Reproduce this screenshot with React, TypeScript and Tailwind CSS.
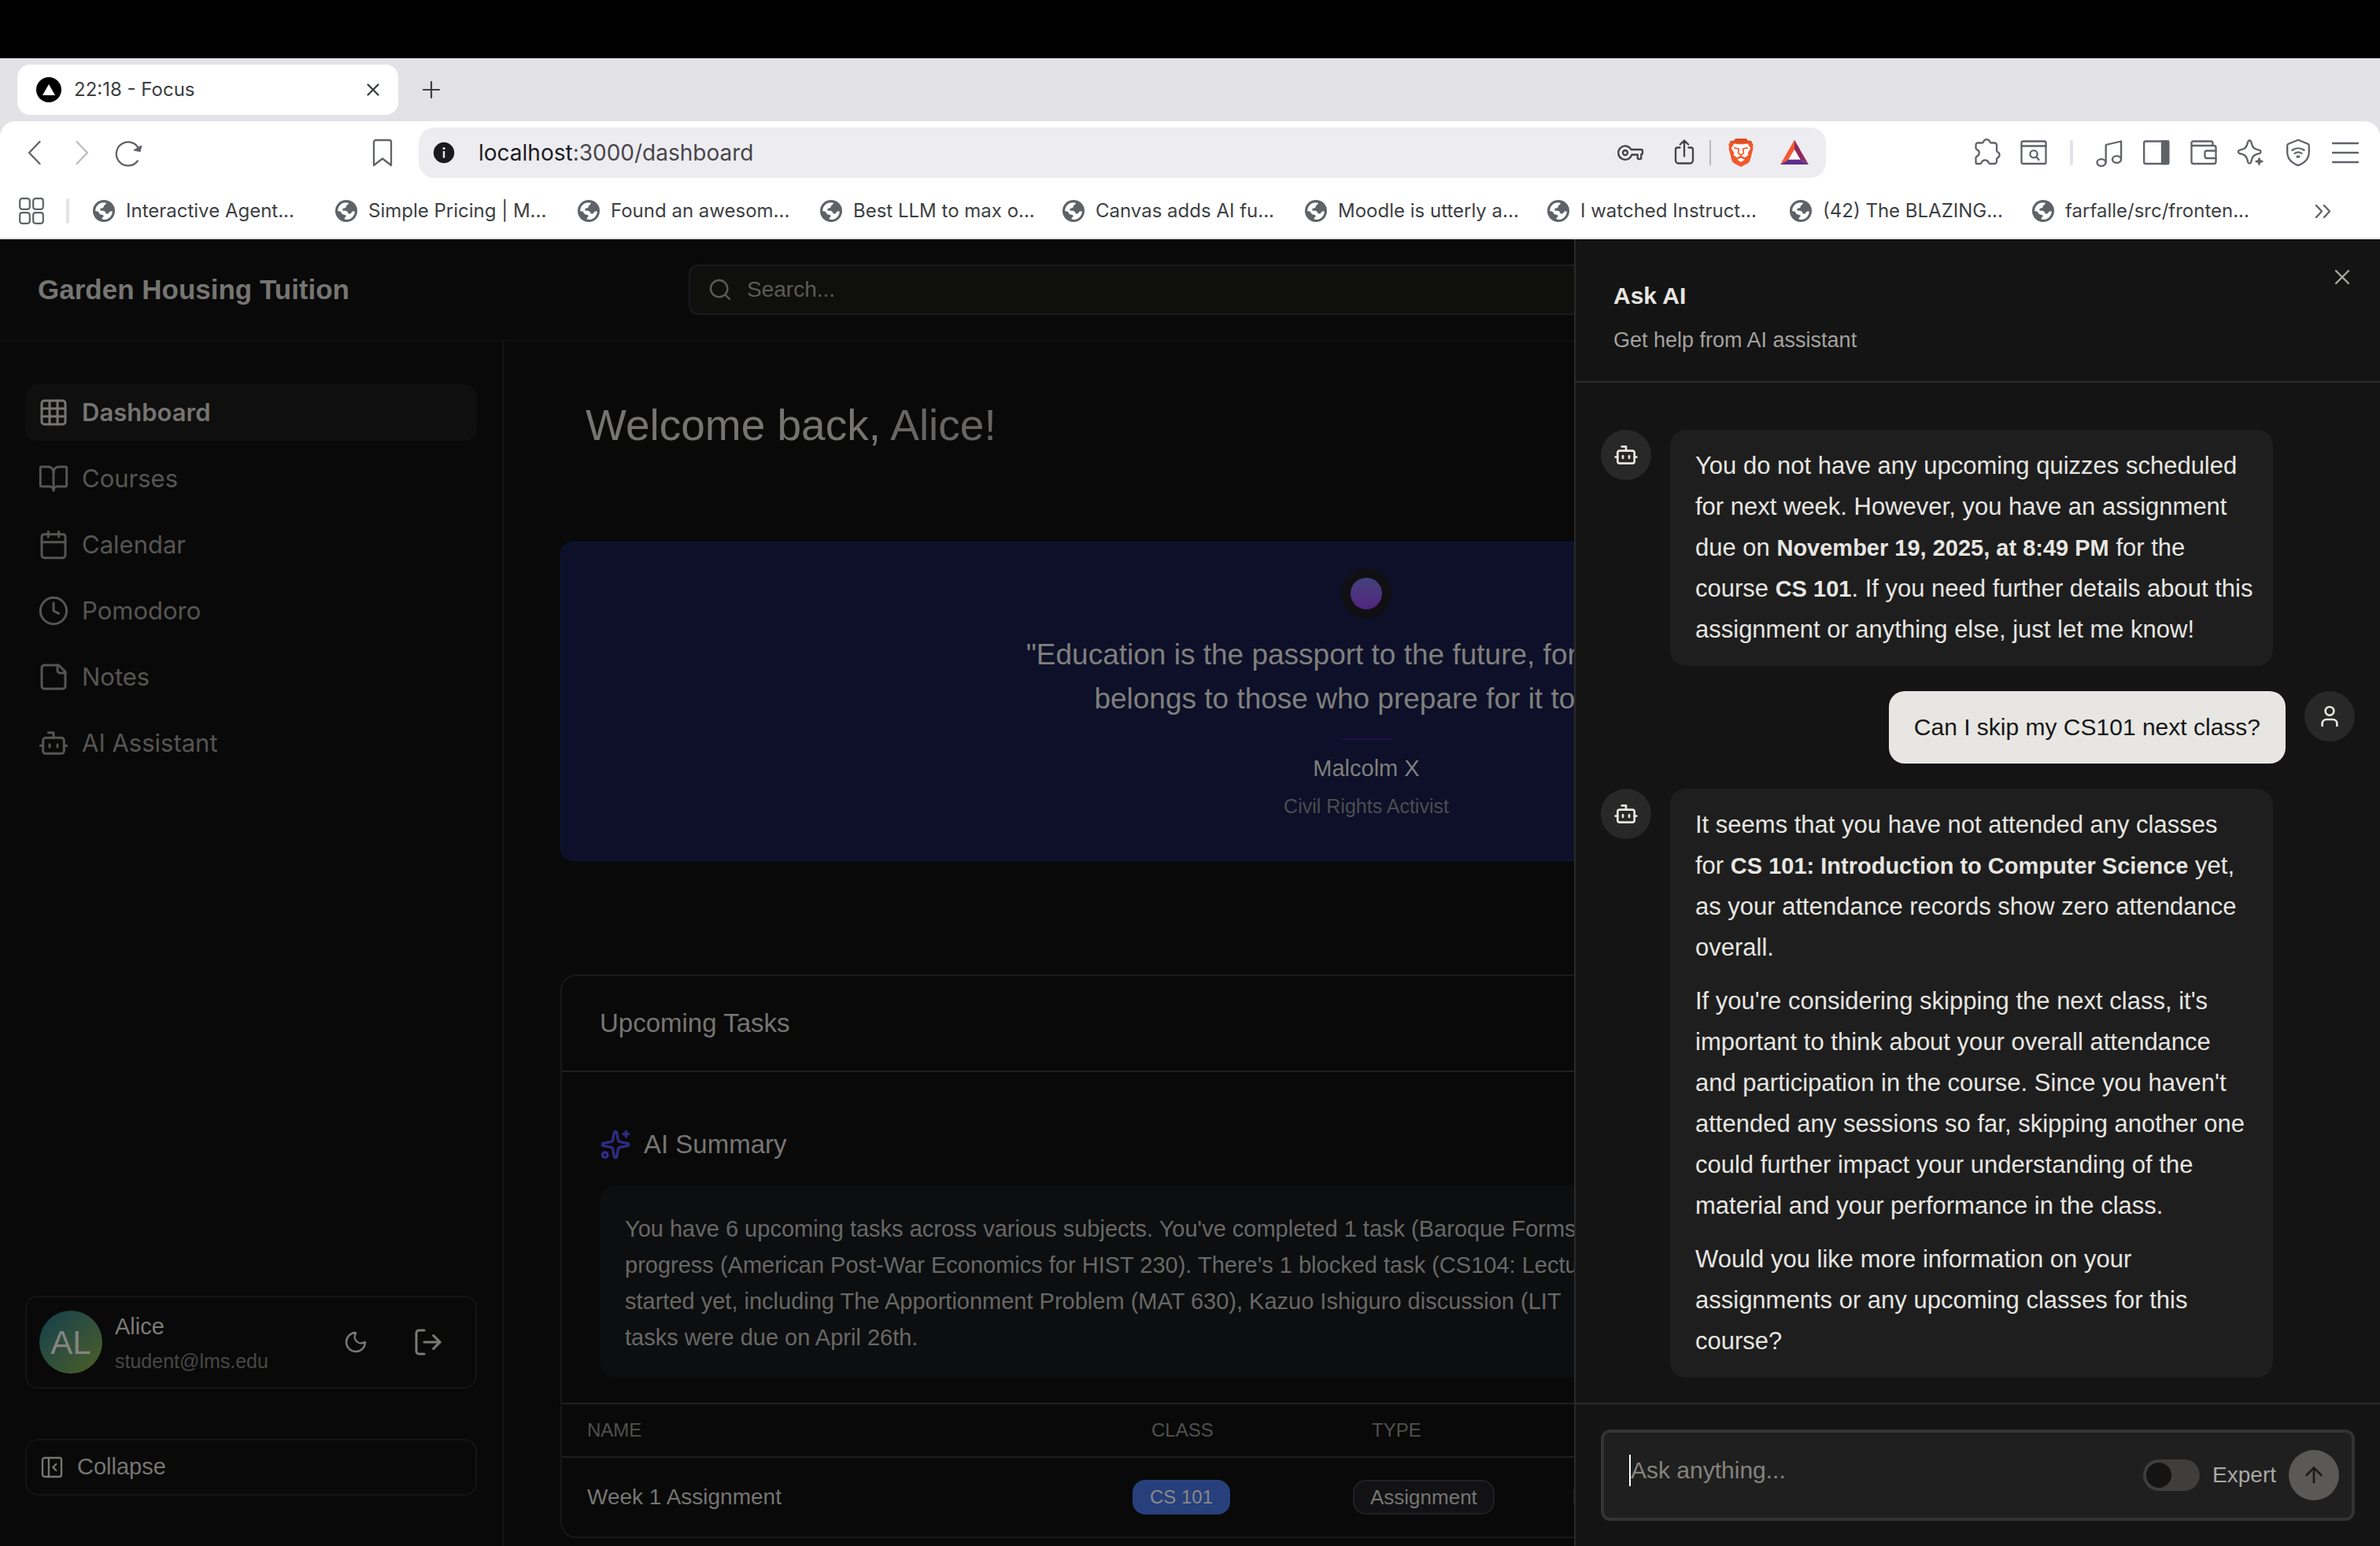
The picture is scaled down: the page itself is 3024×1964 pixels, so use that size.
import React from "react";
import {
  ArrowUp,
  BookOpen,
  Bot,
  Calendar,
  Clock4,
  Grid3x3,
  LogOut,
  Moon,
  PanelLeftClose,
  Search,
  Sparkles,
  User,
  X,
} from "lucide-react";

const CHROME_FONT = "font-[Inter,sans-serif]";
const APP_FONT = "font-['Liberation_Sans',Arial,sans-serif]";

/* ---------- Browser icons ---------- */

function Glyph({ children, className = "size-9" }: { children: React.ReactNode; className?: string }) {
  return (
    <svg
      viewBox="0 0 36 36"
      fill="none"
      stroke="currentColor"
      strokeWidth="2.3"
      strokeLinecap="round"
      strokeLinejoin="round"
      aria-hidden="true"
      className={`${className} shrink-0`}
    >
      {children}
    </svg>
  );
}

function GlobeIcon() {
  return (
    <svg viewBox="0 0 28 28" aria-hidden="true" className="size-7 shrink-0">
      <circle cx="14" cy="14" r="14" fill="#5f6368" />
      <path
        d="M3.2 14.2C3 9 6.600 4.300 11.800 3.400L16.500 3.400C17 5 16.200 5.800 14.800 6.500 13.600 7.200 14.200 9 12.800 10 11.400 10.800 9.500 10.200 9.300 12L9.300 13.600 13 13.800C15.500 14 16.200 15.600 16.600 17.400L19 17.600C20.500 17.400 20.600 15.300 22 14.600L24.800 14.400C24.800 19.800 20.400 24.600 15 24.900L11.600 24.600C11.400 22.600 12.600 21.900 13.600 21 14 19.600 12.800 18.800 11.200 18.700 8.500 18.500 7.800 16.800 7.200 15.200 6.500 14.300 4.800 14.200 3.200 14.200Z"
        fill="#fff"
      />
    </svg>
  );
}

function BraveIcon() {
  return (
    <svg viewBox="0 0 36 36" aria-hidden="true" className="size-9 shrink-0">
      <path
        d="M11.500 0h13l3 3 3.200-.3 3 5.300-.7 3 .5 1.600-3.700 14.400c-.6 2-1.600 3.400-3.200 4.500L18 36l-8.600-4.500c-1.600-1.100-2.600-2.500-3.200-4.500L2.500 12.600 3 11 2.300 8l3-5.300 3.200.3z"
        fill="#f1592a"
      />
      <path d="M11.500 0h13l3 3 3.200-.3 1.500 2.600H3.800l1.500-2.600 3.200.3z" fill="#dc4f23" />
      <path
        d="M9.500 6.500l5 .8h7l5-.8 3.800 6.100-3.600 5.400.6 3-4.300 3.300-3.700-2.100h-2.600L13 24.300l-4.300-3.300.6-3-3.600-5.400z"
        fill="#fff"
      />
      <path d="M18 24.500l4.800 2.200-4.800 3.300-4.800-3.300z" fill="#fff" />
      <path
        d="M9.800 11.800l5.400 1.200M26.200 11.800l-5.400 1.200M15.400 13.600l-.9 5 3.500 2.400 3.500-2.400-.9-5M18 21v2.500"
        fill="none"
        stroke="#f1592a"
        strokeWidth="1.700"
        strokeLinecap="round"
        strokeLinejoin="round"
      />
    </svg>
  );
}

function BatIcon() {
  return (
    <svg viewBox="0 0 36 36" aria-hidden="true" className="size-9 shrink-0">
      <path d="M18 1.700L0 33l10.700-6.600L18 14z" fill="#f15a32" />
      <path d="M18 1.700L36 33l-10.700-6.600L18 14z" fill="#8f2a5e" />
      <path d="M0 33h36l-10.700-6.600H10.700z" fill="#5f2f8c" />
      <path d="M18 14l7.300 12.400H10.700z" fill="#fff" />
    </svg>
  );
}

const BOOKMARKS = [
  "Interactive Agent...",
  "Simple Pricing | M...",
  "Found an awesom...",
  "Best LLM to max o...",
  "Canvas adds AI fu...",
  "Moodle is utterly a...",
  "I watched Instruct...",
  "(42) The BLAZING...",
  "farfalle/src/fronten...",
];

function BrowserChrome() {
  return (
    <header className={`shrink-0 bg-[#e3e2e7] text-[#3c4043] ${CHROME_FONT}`}>
      <div className="flex h-20 items-center pl-[22px]">
        <div className="flex h-16 w-[484px] items-center rounded-2xl bg-white pl-6 pr-[22px]">
          <span className="flex size-8 shrink-0 items-center justify-center rounded-full bg-black">
            <svg viewBox="0 0 16 14" aria-hidden="true" className="h-3.5 w-4">
              <path d="M8 0l8 14H0z" fill="#fff" />
            </svg>
          </span>
          <span className="ml-4 flex-1 text-2xl">22:18 - Focus</span>
          <button type="button" aria-label="Close tab" className="flex size-5 items-center justify-center">
            <svg viewBox="0 0 20 20" fill="none" stroke="#3c4043" strokeWidth="2.400" strokeLinecap="round" className="size-5">
              <path d="M3.500 3.500l13 13M16.500 3.500l-13 13" />
            </svg>
          </button>
        </div>
        <button type="button" aria-label="New tab" className="ml-[30px] flex size-6 items-center justify-center">
          <svg viewBox="0 0 24 24" fill="none" stroke="#3c4043" strokeWidth="2.200" strokeLinecap="round" className="size-6">
            <path d="M12 2v20M2 12h20" />
          </svg>
        </button>
      </div>

      <div className="rounded-t-[20px] border-b-2 border-[#e1e3e6] bg-white">
        <div className="flex h-20 items-center pl-[26px] pr-[26px] text-[#5f6368]">
          <button type="button" aria-label="Back">
            <Glyph>
              <path d="M24.500 4L11 18l13.500 14" />
            </Glyph>
          </button>
          <button type="button" aria-label="Forward" className="ml-6 text-[#bdbdbf]">
            <Glyph>
              <path d="M11.500 4L25 18 11.500 32" />
            </Glyph>
          </button>
          <button type="button" aria-label="Reload" className="ml-6">
            <Glyph>
              <path d="M31 14.500A15 15 0 1 0 28.800 28.500" />
              <path d="M33.500 9.500l-1.500 6.700-7.600-1.400z" fill="currentColor" strokeWidth="1.500" />
            </Glyph>
          </button>
          <button type="button" aria-label="Bookmark" className="ml-[286px]">
            <Glyph>
              <path d="M7 4.500a2.500 2.500 0 0 1 2.500-2.500h17A2.500 2.500 0 0 1 29 4.500V34l-11-8.500L7 34z" />
            </Glyph>
          </button>

          <div className="ml-7 flex h-16 min-w-0 flex-1 items-center rounded-[20px] bg-[#edecf1] pl-[18px] pr-[22px] text-[#424347]">
            <svg viewBox="0 0 28 28" aria-hidden="true" className="size-7 shrink-0">
              <circle cx="14" cy="14" r="13.200" fill="#1b1b1f" />
              <rect x="12.800" y="12" width="2.400" height="8.500" fill="#edecf1" />
              <circle cx="14" cy="8.600" r="1.600" fill="#edecf1" />
            </svg>
            <a href="#dashboard" className="ml-[30px] flex-1 text-[28px] leading-9 text-[#47464b]">
              <span className="text-[#1b1b1f]">localhost</span>:3000/dashboard
            </a>
            <button type="button" aria-label="Passwords">
              <Glyph>
                <path d="M18.600 14H31a2 2 0 0 1 2 2v2.500c0 1-.6 1.500-1.700 1.500v4.500a1.500 1.500 0 0 1-1.500 1.500h-1.600a1.500 1.500 0 0 1-1.500-1.500V20.500h-7.400A8.700 8.700 0 1 1 18.600 14z" />
                <circle cx="11" cy="18" r="3" />
              </Glyph>
            </button>
            <button type="button" aria-label="Share" className="ml-8">
              <Glyph>
                <path d="M12.500 11.500h-3A2.500 2.500 0 0 0 7 14v13.500a4 4 0 0 0 4 4h14a4 4 0 0 0 4-4V14a2.500 2.500 0 0 0-2.500-2.500h-3M18 22.500V3M12.800 7.500L18 2.500l5.200 5" />
              </Glyph>
            </button>
            <span className="ml-3.5 h-8 w-0.5 bg-[#b9b9be]" />
            <button type="button" aria-label="Brave Shields" className="ml-5">
              <BraveIcon />
            </button>
            <button type="button" aria-label="Brave Rewards" className="ml-8">
              <BatIcon />
            </button>
          </div>

          <div className="ml-[186px] flex items-center gap-6">
            <button type="button" aria-label="Extensions">
              <Glyph>
                <path d="M4.500 12V8A2.500 2.500 0 0 1 7 5.500h5c1.200 0 1.900-.5 2.200-1.400a4.200 4.200 0 0 1 8 0c.3.9 1 1.400 2.200 1.400H28a3 3 0 0 1 3 3V15c0 1.200.4 1.800 1.300 2.200a4 4 0 0 1 0 7.200c-.9.400-1.300 1-1.300 2.200V29a3 3 0 0 1-3 3h-5.500c-1 0-1.500-.5-1.800-1.300a4.700 4.700 0 0 0-9 0c-.3.8-.8 1.300-1.800 1.300H5.500a1 1 0 0 1-1-1v-6.500c0-1 .4-1.500 1.300-1.900a4.700 4.700 0 0 0 0-8.700c-.9-.4-1.300-.9-1.300-1.900z" />
              </Glyph>
            </button>
            <button type="button" aria-label="Search tabs">
              <Glyph>
                <rect x="2.500" y="3.500" width="31" height="28.500" rx="2" />
                <path d="M2.500 9.500h31M21.500 23.500l3 3.500" />
                <circle cx="18" cy="19.800" r="4.600" />
              </Glyph>
            </button>
            <span className="mx-1 h-8 w-1 rounded-full bg-[#e3e2e7]" />
            <button type="button" aria-label="Playlist">
              <Glyph>
                <ellipse cx="8" cy="30.500" rx="5.500" ry="4.300" />
                <ellipse cx="27.500" cy="26.500" rx="5.500" ry="4.300" />
                <path d="M13.700 30.500V8l19.400-4.500v23" />
              </Glyph>
            </button>
            <button type="button" aria-label="Sidebar">
              <Glyph>
                <rect x="2.200" y="3.500" width="31" height="28.500" rx="2" />
                <path d="M25 3.500h8.200v28.500H25z" fill="currentColor" />
              </Glyph>
            </button>
            <button type="button" aria-label="Wallet">
              <Glyph>
                <path d="M2.500 9v20.500A2.500 2.500 0 0 0 5 32h26a2.500 2.500 0 0 0 2.500-2.500v-18A2.500 2.500 0 0 0 31 9zM2.500 9V5.500a2 2 0 0 1 2-2H27A2.500 2.500 0 0 1 29.500 6v3" />
                <path d="M33.500 15.500H22a2.500 2.500 0 0 0-2.500 2.500v4.500A2.500 2.500 0 0 0 22 25h11.500" />
              </Glyph>
            </button>
            <button type="button" aria-label="Leo AI">
              <Glyph>
                <path d="M14.200 4c.6-2 3.400-2 4 0l1.300 4.300a8 8 0 0 0 5.200 5.200l4.300 1.300c2 .6 2 3.400 0 4l-4.300 1.300a8 8 0 0 0-5.200 5.200l-1.300 4.700c-.6 2-3.400 2-4 0l-1.300-4.700a8 8 0 0 0-5.200-5.200l-4.300-1.300c-2-.6-2-3.400 0-4l4.300-1.300a8 8 0 0 0 5.200-5.200z" />
                <path d="M28.500 24.500l1.200 3.300 3.300 1.200-3.300 1.200-1.200 3.300-1.200-3.300-3.300-1.200 3.300-1.200z" fill="currentColor" strokeWidth="1.500" />
              </Glyph>
            </button>
            <button type="button" aria-label="VPN">
              <Glyph>
                <path d="M18 1.800l12.300 5c.9.400 1.500 1 1.500 2V17c0 8-5.300 14-13.800 17.200C9.500 31 4.200 25 4.200 17V8.800c0-1 .6-1.600 1.500-2z" />
                <path d="M10.500 14.800c4.500-3.200 10.500-3.200 15 0M13.600 18.900c2.700-1.900 6.100-1.900 8.800 0" />
                <path d="M17 23h2" strokeWidth="3.200" />
              </Glyph>
            </button>
            <button type="button" aria-label="Menu">
              <Glyph>
                <path d="M2 6h32M2 18h32M2 30h32" />
              </Glyph>
            </button>
          </div>
        </div>

        <nav aria-label="Bookmarks" className="flex h-[68px] items-center pl-6 pr-[60px]">
          <button type="button" aria-label="All bookmarks">
            <svg viewBox="0 0 32 34" fill="none" stroke="#5f6368" strokeWidth="2.200" className="h-[34px] w-8">
              <rect x="1.200" y="1.200" width="12.600" height="13.600" rx="3" />
              <rect x="18.200" y="1.200" width="12.600" height="13.600" rx="3" />
              <rect x="1.200" y="19.200" width="12.600" height="13.600" rx="3" />
              <rect x="18.200" y="19.200" width="12.600" height="13.600" rx="3" />
            </svg>
          </button>
          <span className="ml-7 h-8 w-1 rounded-full bg-[#e3e2e7]" />
          <ul className="ml-[30px] flex flex-1">
            {BOOKMARKS.map((b) => (
              <li key={b} className="w-[308px]">
                <a href="#bookmark" className="flex items-center gap-3.5 whitespace-nowrap text-2xl">
                  <GlobeIcon />
                  {b}
                </a>
              </li>
            ))}
          </ul>
          <button type="button" aria-label="More bookmarks">
            <svg viewBox="0 0 24 24" fill="none" stroke="#5f6368" strokeWidth="2.400" strokeLinecap="round" strokeLinejoin="round" className="size-6">
              <path d="M3 5l7 7.500L3 20M13 5l7 7.500-7 7.500" />
            </svg>
          </button>
        </nav>
      </div>
    </header>
  );
}

/* ---------- Dashboard ---------- */

function NoteIcon() {
  return (
    <svg viewBox="0 0 24 24" fill="none" stroke="currentColor" strokeWidth="1.800" strokeLinecap="round" strokeLinejoin="round" aria-hidden="true" className="size-10">
      <path d="M16 3H5a2 2 0 0 0-2 2v14a2 2 0 0 0 2 2h14a2 2 0 0 0 2-2V8Z" />
      <path d="M15 3v4a2 2 0 0 0 2 2h4" />
    </svg>
  );
}

const NAV = [
  { label: "Dashboard", icon: <Grid3x3 className="size-10" strokeWidth={1.8} />, active: true },
  { label: "Courses", icon: <BookOpen className="size-10" strokeWidth={1.8} /> },
  { label: "Calendar", icon: <Calendar className="size-10" strokeWidth={1.8} /> },
  { label: "Pomodoro", icon: <Clock4 className="size-10" strokeWidth={1.8} /> },
  { label: "Notes", icon: <NoteIcon /> },
  { label: "AI Assistant", icon: <Bot className="size-10" strokeWidth={1.8} /> },
];

function Sidebar() {
  return (
    <aside className="flex w-[640px] shrink-0 flex-col border-r-2 border-[#151515] px-8 pb-16 pt-[54px]">
      <nav aria-label="Main" className={`flex flex-col gap-3 text-[31px] ${CHROME_FONT}`}>
        {NAV.map((item) => (
          <a
            key={item.label}
            href="#nav"
            className={
              item.active
                ? "flex h-[72px] items-center gap-4 rounded-2xl bg-[#0f0f0f] px-4 font-semibold text-[#767572]"
                : "flex h-[72px] items-center gap-4 rounded-2xl px-4 text-[#565553]"
            }
          >
            {item.icon}
            {item.label}
          </a>
        ))}
      </nav>

      <div className="mt-auto flex h-[118px] items-center rounded-2xl border-2 border-[#151515] px-4 text-[#7b7a77]">
        <span className="flex size-20 shrink-0 items-center justify-center rounded-full bg-linear-to-br from-[#123e4a] to-[#4c5f1f] text-[42px] text-[#858481]">
          AL
        </span>
        <div className="ml-4 flex-1 pt-1">
          <p className="text-[29px] leading-10">Alice</p>
          <p className="mt-1 text-[25px] leading-10 text-[#484745]">student@lms.edu</p>
        </div>
        <button type="button" aria-label="Toggle theme" className="mr-14">
          <Moon className="size-8" strokeWidth={1.8} />
        </button>
        <button type="button" aria-label="Log out" className="mr-6">
          <LogOut className="size-10" strokeWidth={1.8} />
        </button>
      </div>

      <button
        type="button"
        className="mt-16 flex h-[72px] items-center gap-4 rounded-2xl border-2 border-[#151515] px-4 text-[29px] text-[#767572]"
      >
        <PanelLeftClose className="size-8" strokeWidth={1.8} />
        Collapse
      </button>
    </aside>
  );
}

function QuoteCard() {
  return (
    <section className="flex flex-col items-center rounded-2xl border-2 border-[#0b1433] bg-[#0d1028] px-8 pb-12 pt-8 text-center text-[#807f7d]">
      <span className="flex size-16 items-center justify-center rounded-full bg-[#101014]">
        <span className="size-10 rounded-full bg-linear-to-b from-[#42417d] to-[#53247f]" />
      </span>
      <blockquote className="mt-[18px] max-w-4xl text-[37px] leading-14">
        "Education is the passport to the future, for tomorrow belongs to those who prepare for it today."
      </blockquote>
      <span className="mt-[22px] h-0.5 w-16 bg-[#2a0c4b]" />
      <p className="mt-4 text-[29px] leading-10">Malcolm X</p>
      <p className="mt-2 text-[25px] leading-10 text-[#4c4c52]">Civil Rights Activist</p>
    </section>
  );
}

const SUMMARY = [
  "You have 6 upcoming tasks across various subjects. You've completed 1 task (Baroque Forms",
  "progress (American Post-War Economics for HIST 230). There's 1 blocked task (CS104: Lecture",
  "started yet, including The Apportionment Problem (MAT 630), Kazuo Ishiguro discussion (LIT",
  "tasks were due on April 26th.",
];

function TasksCard() {
  return (
    <section className="mt-36 overflow-hidden rounded-[20px] border-2 border-[#18181a] text-[#767572]">
      <h2 className="border-b-2 border-[#202022] px-12 py-9 text-[33px] leading-12">Upcoming Tasks</h2>
      <div className="border-b-2 border-[#202022] px-12 pb-8 pt-[68px]">
        <h3 className="flex items-center gap-4 text-[33px] leading-12">
          <Sparkles className="size-10 text-[#2f2c83]" strokeWidth={2} />
          AI Summary
        </h3>
        <p className="mt-7 whitespace-nowrap rounded-[20px] bg-[#0d0e10] p-8 pb-7 text-[29px] leading-[46px] text-[#696865]">
          {SUMMARY.map((line) => (
            <span key={line} className="block">
              {line}
            </span>
          ))}
        </p>
      </div>
      <table className="w-full table-fixed text-left">
        <colgroup>
          <col className="w-[693px]" />
          <col className="w-[280px]" />
          <col className="w-[280px]" />
          <col />
        </colgroup>
        <thead>
          <tr className="h-[67px] border-b-2 border-[#202022] text-2xl text-[#51504e]">
            <th className="px-8 font-normal">NAME</th>
            <th className="px-14 font-normal">CLASS</th>
            <th className="px-14 font-normal">TYPE</th>
            <th className="px-14 font-normal">STATUS</th>
          </tr>
        </thead>
        <tbody>
          <tr className="h-[101px]">
            <td className="px-8 text-[28px]">Week 1 Assignment</td>
            <td className="px-8">
              <span className="inline-flex h-11 items-center rounded-2xl bg-[#27407c] px-[22px] align-middle text-2xl text-[#8a8987]">
                CS 101
              </span>
            </td>
            <td className="px-8">
              <span className="inline-flex h-11 items-center rounded-2xl border-2 border-[#202022] bg-[#121214] px-5 align-middle text-[26px]">
                Assignment
              </span>
            </td>
            <td className="px-8">
              <span className="inline-flex h-11 items-center rounded-2xl border-2 border-[#202022] bg-[#121214] px-5 align-middle text-[26px]">
                To do
              </span>
            </td>
          </tr>
        </tbody>
      </table>
    </section>
  );
}

/* ---------- Ask AI panel ---------- */

function Avatar({ children }: { children: React.ReactNode }) {
  return (
    <span className="flex size-16 shrink-0 items-center justify-center rounded-full bg-[#282828] text-[#e7e6e2]">
      {children}
    </span>
  );
}

function Strong({ children }: { children: React.ReactNode }) {
  return <strong className="text-[29px] font-bold leading-none">{children}</strong>;
}

function Lines({ lines }: { lines: React.ReactNode[] }) {
  return (
    <p>
      {lines.map((line, i) => (
        <span key={i} className="block whitespace-nowrap">
          {line}
        </span>
      ))}
    </p>
  );
}

function BotMessage({ children }: { children: React.ReactNode }) {
  return (
    <li className="flex gap-6">
      <Avatar>
        <Bot className="size-8" strokeWidth={2} />
      </Avatar>
      <div className="flex w-4/5 flex-col gap-4 rounded-[20px] bg-[#1e1e1e] px-8 py-5 text-[31px] leading-[52px] text-[#e7e6e2]">
        {children}
      </div>
    </li>
  );
}

function AskPanel() {
  return (
    <aside
      aria-label="Ask AI"
      className="absolute inset-y-0 right-0 flex w-[1024px] flex-col border-l-2 border-[#2a2a2a] bg-[#141414]"
    >
      <header className="flex items-start justify-between border-b-2 border-[#2a2a2a] pb-8 pl-12 pr-8">
        <div className="pt-12">
          <h2 className="text-[30px] font-bold leading-12 text-[#e7e6e2]">Ask AI</h2>
          <p className="mt-3 text-[27px] leading-10 text-[#a3a29f]">Get help from AI assistant</p>
        </div>
        <button type="button" aria-label="Close" className="mt-8 text-[#a9a8a5]">
          <X className="size-8" strokeWidth={1.8} />
        </button>
      </header>

      <ul className="flex flex-1 flex-col gap-8 overflow-hidden px-8 pt-[60px]">
        <BotMessage>
          <Lines
            lines={[
              "You do not have any upcoming quizzes scheduled",
              "for next week. However, you have an assignment",
              <>due on <Strong>November 19, 2025, at 8:49 PM</Strong> for the</>,
              <>course <Strong>CS 101</Strong>. If you need further details about this</>,
              "assignment or anything else, just let me know!",
            ]}
          />
        </BotMessage>
        <li className="flex justify-end gap-6">
          <p className="rounded-[20px] bg-[#e7e6e2] px-8 py-5 text-[30px] leading-[52px] text-[#171717]">
            Can I skip my CS101 next class?
          </p>
          <Avatar>
            <User className="size-8" strokeWidth={2} />
          </Avatar>
        </li>
        <BotMessage>
          <Lines
            lines={[
              "It seems that you have not attended any classes",
              <>for <Strong>CS 101: Introduction to Computer Science</Strong> yet,</>,
              "as your attendance records show zero attendance",
              "overall.",
            ]}
          />
          <Lines
            lines={[
              "If you're considering skipping the next class, it's",
              "important to think about your overall attendance",
              "and participation in the course. Since you haven't",
              "attended any sessions so far, skipping another one",
              "could further impact your understanding of the",
              "material and your performance in the class.",
            ]}
          />
          <Lines
            lines={[
              "Would you like more information on your",
              "assignments or any upcoming classes for this",
              "course?",
            ]}
          />
        </BotMessage>
      </ul>

      <form className="border-t-2 border-[#2a2a2a] px-8 py-8" onSubmit={(e) => e.preventDefault()}>
        <div className="flex h-[116px] items-center rounded-xl border-4 border-[#333333] bg-[#1f1f1f] pl-8 pr-4">
          <span className="mb-3 h-10 w-0.5 bg-white" />
          <input
            type="text"
            aria-label="Ask anything"
            placeholder="Ask anything..."
            className="mb-3 min-w-0 flex-1 bg-transparent text-[30px] leading-10 text-[#e7e6e2] outline-none placeholder:text-[#85837f]"
          />
          <label className="flex items-center gap-4 text-[28px] leading-10 text-[#a9a8a5]">
            <input
              type="checkbox"
              className="relative h-10 w-[72px] appearance-none rounded-full bg-[#3f3e3c] before:absolute before:left-1 before:top-1 before:size-8 before:rounded-full before:bg-[#141414]"
            />
            Expert
          </label>
          <button
            type="submit"
            aria-label="Send"
            className="ml-4 flex size-16 items-center justify-center rounded-full bg-[#5a5957] text-[#1b1b1b]"
          >
            <ArrowUp className="size-8" strokeWidth={2} />
          </button>
        </div>
      </form>
    </aside>
  );
}

export default function App() {
  return (
    <div className="flex h-screen flex-col overflow-hidden bg-black pt-[74px]">
      <BrowserChrome />
      <div className={`relative flex min-h-0 flex-1 flex-col overflow-hidden bg-[#090909] ${APP_FONT}`}>
        <header className="grid h-[130px] shrink-0 grid-cols-[1fr_1274px_1fr] items-center border-b-2 border-[#101010] px-12">
          <h1 className="text-[35px] font-bold text-[#767572]">Garden Housing Tuition</h1>
          <label className="flex h-16 items-center gap-[18px] rounded-xl border-2 border-[#1a1a1f] bg-[#0f0f0d] px-[22px] text-[#5c5b59]">
            <Search className="size-8 shrink-0" strokeWidth={1.8} />
            <input
              type="search"
              aria-label="Search"
              placeholder="Search..."
              className="min-w-0 flex-1 bg-transparent text-[28px] outline-none placeholder:text-[#5c5b59]"
            />
          </label>
        </header>
        <div className="flex min-h-0 flex-1">
          <Sidebar />
          <main className="min-w-0 flex-1 overflow-hidden px-18 pt-[70px]">
            <div className="w-[2048px]">
              <h2 className="mb-28 pl-8 text-[55px] leading-18 text-[#757471]">
                Welcome back, <span className="text-[#666563]">Alice!</span>
              </h2>
              <QuoteCard />
              <TasksCard />
            </div>
          </main>
        </div>
        <AskPanel />
      </div>
    </div>
  );
}
